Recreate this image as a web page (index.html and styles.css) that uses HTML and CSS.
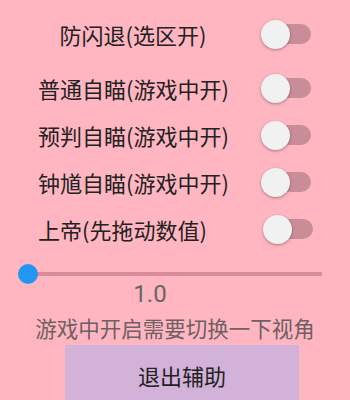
FILE: index.html
```html
<!DOCTYPE html>
<html lang="zh">
<head>
<meta charset="utf-8">
<link rel="stylesheet" href="styles.css">
</head>
<body>
<div class="list">
  <div class="row row-first">
    <div class="label label-center">防闪退(选区开)</div>
    <div class="switch"><span class="track"></span><span class="thumb"></span></div>
  </div>
  <div class="row row-second">
    <div class="label">普通自瞄(游戏中开)</div>
    <div class="switch"><span class="track"></span><span class="thumb"></span></div>
  </div>
  <div class="row">
    <div class="label">预判自瞄(游戏中开)</div>
    <div class="switch"><span class="track"></span><span class="thumb"></span></div>
  </div>
  <div class="row">
    <div class="label">钟馗自瞄(游戏中开)</div>
    <div class="switch"><span class="track"></span><span class="thumb"></span></div>
  </div>
  <div class="row">
    <div class="label">上帝(先拖动数值)</div>
    <div class="switch switch-shift"><span class="track"></span><span class="thumb"></span></div>
  </div>
</div>
<div class="slider"><span class="slider-track"></span><span class="slider-thumb"></span></div>
<div class="value">1.0</div>
<div class="hint">游戏中开启需要切换一下视角</div>
<div class="exit">退出辅助</div>
</body>
</html>
```
FILE: styles.css
```css
html, body {
  margin: 0;
  padding: 0;
  background: #ffb6c1;
  width: 350px;
  height: 400px;
  overflow: hidden;
  font-family: "Noto Sans CJK SC", "Noto Sans", sans-serif;
}
.list {
  padding-top: 12px;
  display: flex;
  flex-direction: column;
  gap: 3px;
}
.row {
  display: flex;
  align-items: center;
  height: 44px;
  padding-left: 38px;
}
.row-first {
  margin-bottom: 7px;
}
.label {
  width: 190px;
  font-size: 22px;
  color: #222;
  white-space: nowrap;
  line-height: 28px;
}
.label-center {
  text-align: center;
}
.switch {
  position: relative;
  width: 50px;
  height: 29px;
  margin-left: 33px;
}
.switch-shift {
  margin-left: 35px;
}
.track {
  position: absolute;
  left: 10px;
  top: 4px;
  width: 40px;
  height: 20px;
  border-radius: 10px;
  background: #c98d97;
}
.thumb {
  position: absolute;
  left: 0;
  top: 0;
  width: 29px;
  height: 29px;
  border-radius: 50%;
  background: #f1f1f1;
  box-shadow: 0 1px 3px rgba(0,0,0,0.35);
}
.slider {
  position: relative;
  margin: 13px 28px 0 18px;
  height: 20px;
}
.slider-track {
  position: absolute;
  left: 0;
  right: 0;
  top: 8px;
  height: 4px;
  background: #d98c98;
}
.slider-thumb {
  position: absolute;
  left: 0;
  top: 0;
  width: 20px;
  height: 20px;
  border-radius: 50%;
  background: #2196f3;
}
.value {
  width: 300px;
  text-align: center;
  margin-top: -2px;
  font-family: Roboto, "Noto Sans", sans-serif;
  font-size: 24px;
  line-height: 24px;
  color: #666;
}
.hint {
  margin-top: 8px;
  text-align: center;
  font-size: 21.5px;
  line-height: 28px;
  color: #6e6063;
  white-space: nowrap;
}
.exit {
  margin: 3px 0 0 65px;
  width: 234px;
  height: 60px;
  line-height: 60px;
  background: #d2b2d8;
  text-align: center;
  font-size: 22px;
  color: #222;
}
```
